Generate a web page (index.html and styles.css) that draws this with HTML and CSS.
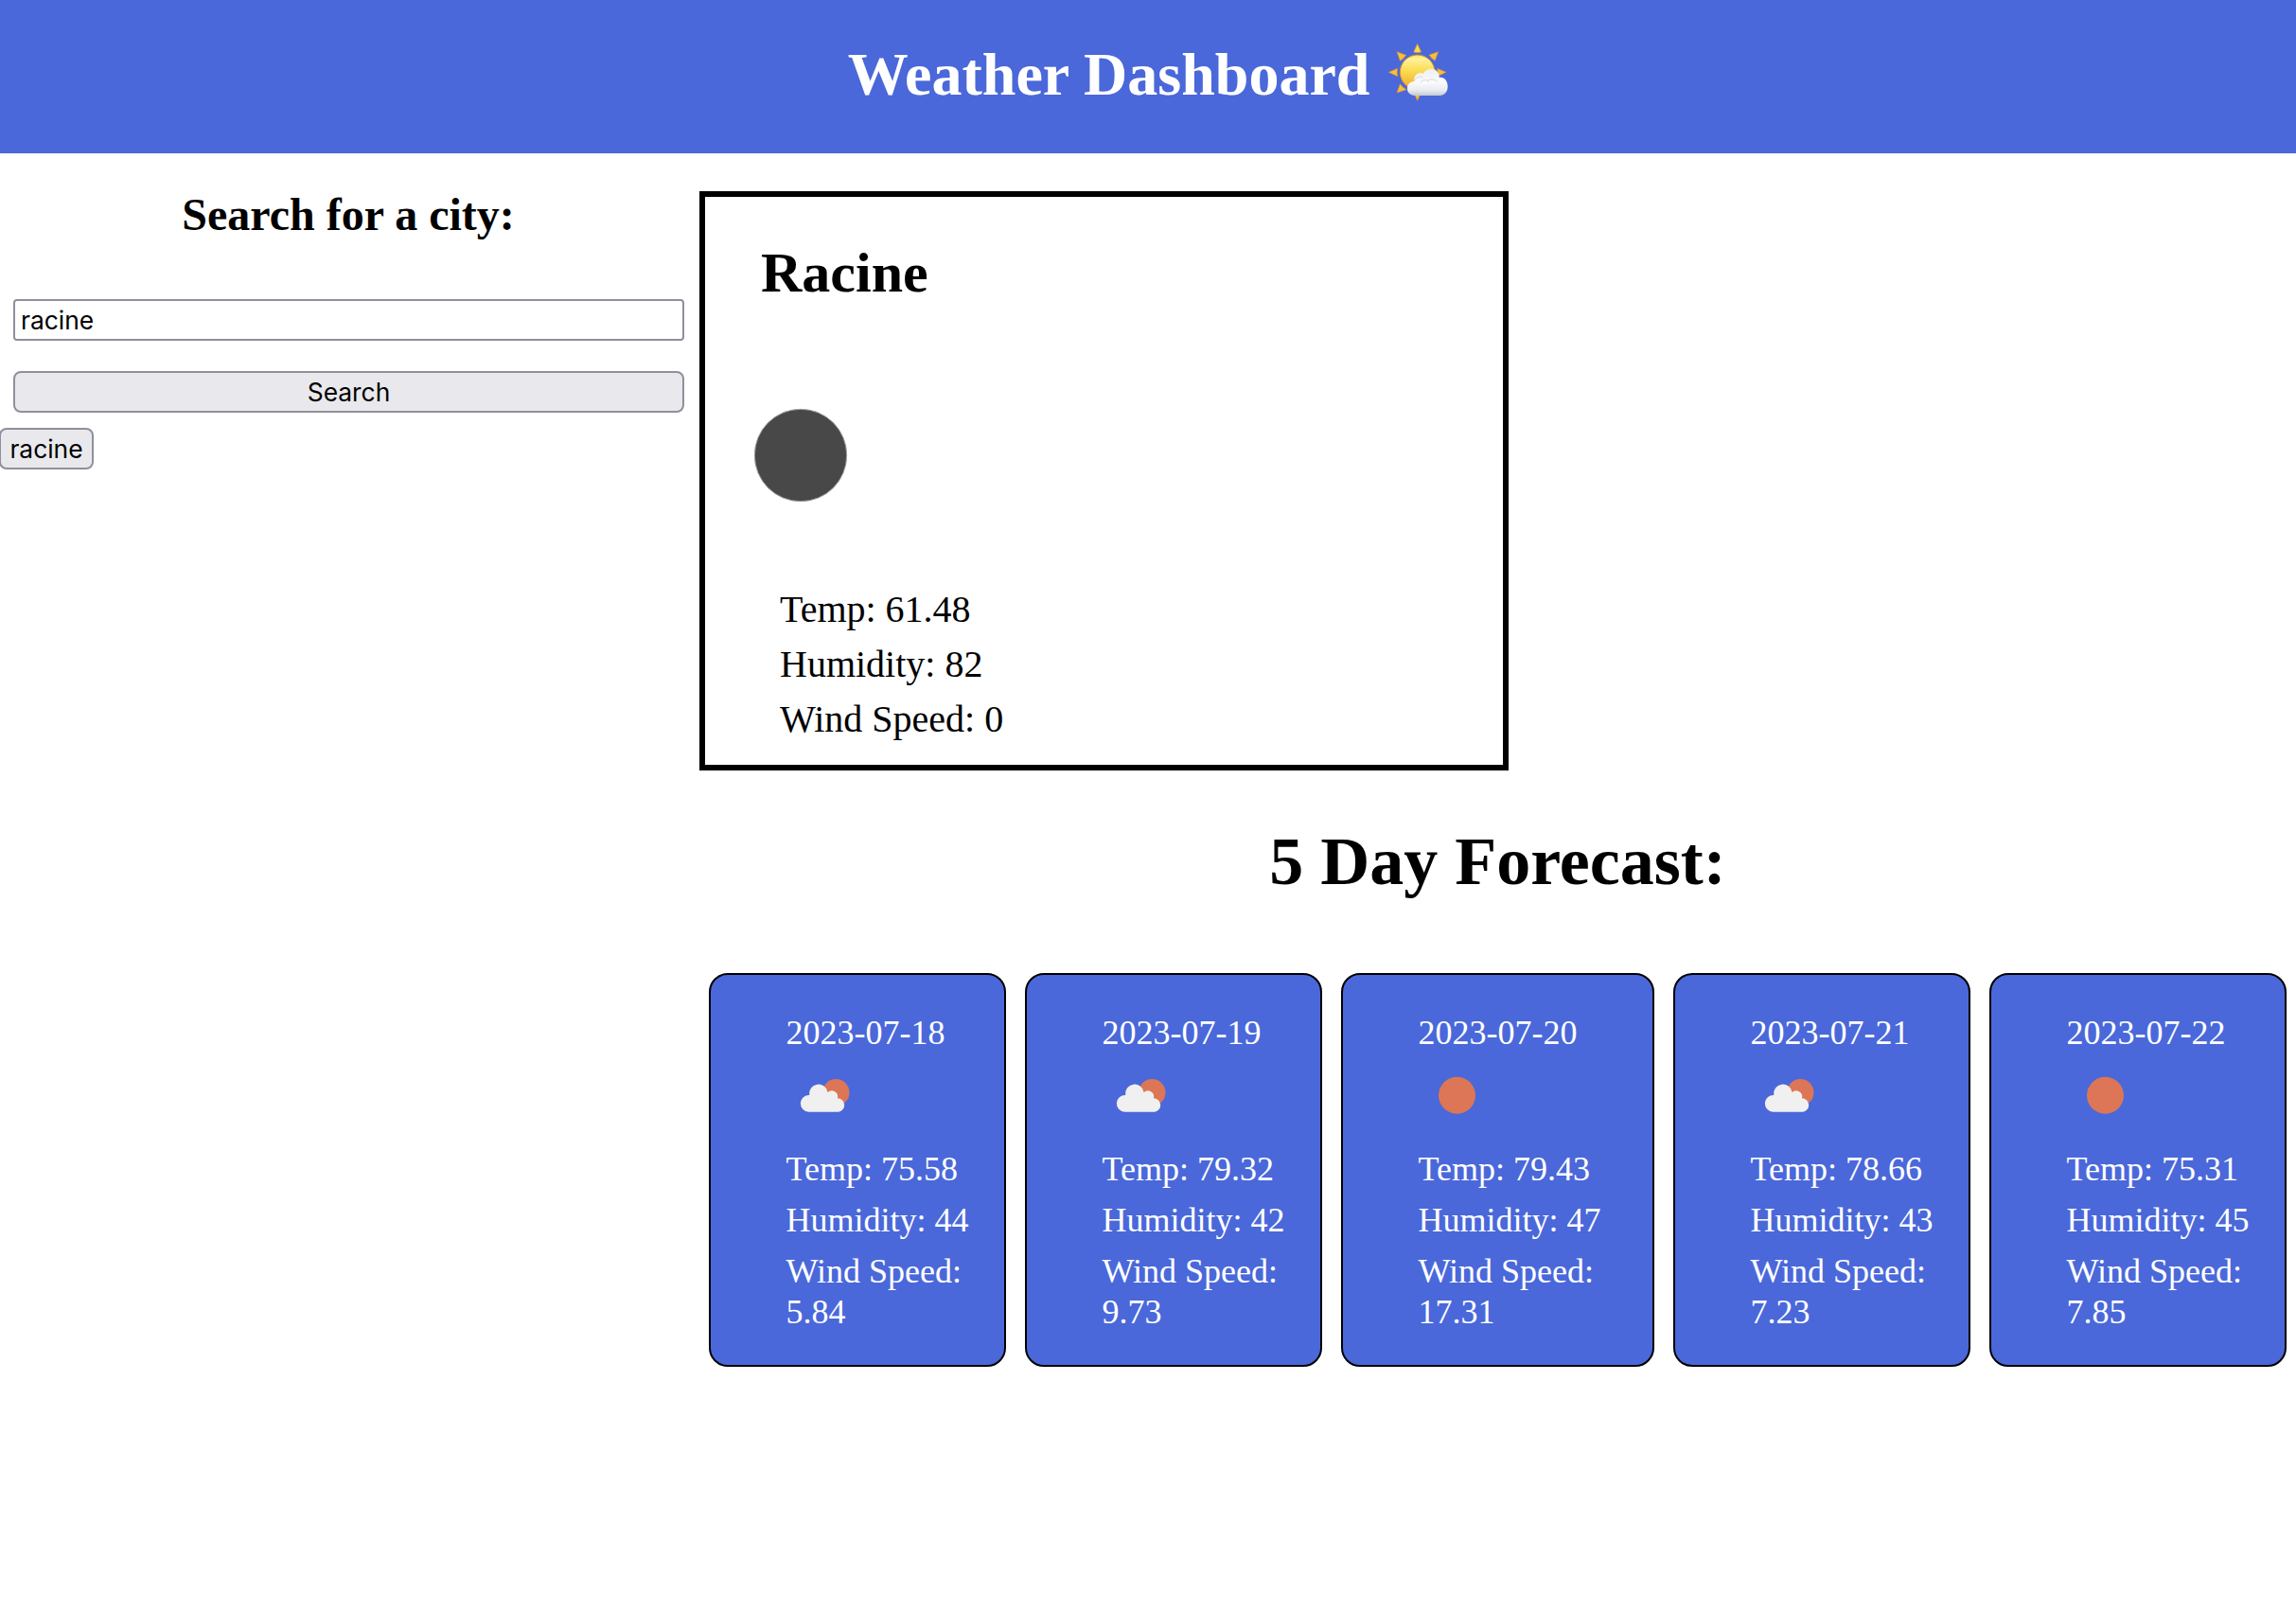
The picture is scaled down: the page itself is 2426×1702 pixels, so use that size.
FILE: index.html
```
<!DOCTYPE html>
<html lang="en">
<head>
<meta charset="UTF-8">
<title>Weather Dashboard</title>
<link rel="stylesheet" href="styles.css">
</head>
<body>
<svg class="defs" width="0" height="0" aria-hidden="true">
  <symbol id="cloudy" viewBox="0 0 80 80">
    <circle cx="52.3" cy="37.3" r="14.2" fill="#dc7656"/>
    <path d="M23.300 57.700a8.900 8.900 0 0 1 .9-17.800a9.800 9.800 0 0 1 19.400-3a6.400 6.400 0 0 1 10.400 6.300a7.300 7.300 0 0 1 1.100 14.500z" fill="#f0f0f0"/>
  </symbol>
  <symbol id="clear" viewBox="0 0 80 80">
    <circle cx="40.5" cy="40.300" r="19.500" fill="#dc7656"/>
  </symbol>
</svg>
<header class="header">
  <h1 class="title">Weather Dashboard <svg class="emoji" viewBox="75 47 192 189" aria-hidden="true">
    <defs>
      <linearGradient id="sun" x1="0" y1="0" x2="0" y2="1"><stop offset="0" stop-color="#fde65a"/><stop offset=".12" stop-color="#fff29a"/><stop offset=".45" stop-color="#fbdc52"/><stop offset="1" stop-color="#f1a62c"/></linearGradient>
      <linearGradient id="cloud" x1="0" y1="0" x2="0" y2="1"><stop offset="0" stop-color="#eef0f4"/><stop offset=".5" stop-color="#fbfbfd"/><stop offset=".8" stop-color="#eaebf0"/><stop offset="1" stop-color="#c3c9d3"/></linearGradient>
    </defs>
    <g fill="#f6bf3c" stroke="#d6902f" stroke-width="2" stroke-linejoin="round">
      <path fill="#fada4e" d="M170 51l12 26q-12 3-24 0z"/>
      <path d="M236 76l-10 28q-12-6-19-18z"/>
      <path d="M105 76l29 11q-7 11-19 18z"/>
      <path d="M79 141l28-12q-3 12 0 25z"/>
      <path d="M261 141l-28-12q3 12 0 25z"/>
      <path d="M105 206l10-28q7 11 20 18z"/>
      <path d="M170 231l-12-27h24z"/>
    </g>
    <circle cx="170" cy="141" r="55" fill="url(#sun)" stroke="#d98f2c" stroke-width="3"/>
    <path d="M162 215c-32 0-32-43-2-45c-3-19 14-32 28-25c15-24 52-17 51 12c17-1 27 12 27 29c0 20-12 29-27 29z" fill="url(#cloud)"/>
    <path d="M161 168c4-11 15-17 26-10M181 173c6-10 18-10 25-2M204 166c11-5 22-2 28 4" fill="none" stroke="#d4d9df" stroke-width="3" stroke-linecap="round"/>
  </svg></h1>
</header>
<main class="layout">
  <aside class="sidebar">
    <h2 class="search-heading">Search for a city:</h2>
    <form class="search-form">
      <input class="field" type="text" value="racine">
      <button class="button" type="button">Search</button>
    </form>
    <button class="button history" type="button">racine</button>
  </aside>
  <section class="content">
    <article class="current">
      <h2 class="city">Racine</h2>
      <svg class="moon" viewBox="0 0 100 100" aria-hidden="true"><circle cx="50" cy="50" r="48.700" fill="#484849" stroke="#a5a5a5" stroke-width="1"/></svg>
      <ul class="current-stats"><li>Temp: 61.48</li><li>Humidity: 82</li><li>Wind Speed: 0</li></ul>
    </article>
    <h2 class="forecast-heading">5 Day Forecast:</h2>
    <div class="forecast">
      <ul class="day"><li>2023-07-18</li><li class="icon"><svg><use href="#cloudy"/></svg></li><li>Temp: 75.58</li><li>Humidity: 44</li><li>Wind Speed: 5.84</li></ul>
      <ul class="day"><li>2023-07-19</li><li class="icon"><svg><use href="#cloudy"/></svg></li><li>Temp: 79.32</li><li>Humidity: 42</li><li>Wind Speed: 9.73</li></ul>
      <ul class="day"><li>2023-07-20</li><li class="icon"><svg><use href="#clear"/></svg></li><li>Temp: 79.43</li><li>Humidity: 47</li><li>Wind Speed: 17.31</li></ul>
      <ul class="day"><li>2023-07-21</li><li class="icon"><svg><use href="#cloudy"/></svg></li><li>Temp: 78.66</li><li>Humidity: 43</li><li>Wind Speed: 7.23</li></ul>
      <ul class="day"><li>2023-07-22</li><li class="icon"><svg><use href="#clear"/></svg></li><li>Temp: 75.31</li><li>Humidity: 45</li><li>Wind Speed: 7.85</li></ul>
    </div>
  </section>
</main>
</body>
</html>
```
FILE: styles.css
```
* { box-sizing: border-box; }
body { margin: 0; background: #fff; color: #000; font-family: "Liberation Serif", "Times New Roman", serif; overflow: hidden; }
h1, h2, ul { margin: 0; padding: 0; }
ul { list-style: none; }
.defs { display: none; }

.header { height: 162px; padding-top: 42px; background: #4a68da; color: #fff; text-align: center; }
.title { font-size: 64px; line-height: 74px; }
.emoji { width: 64px; height: 63px; margin-left: 3px; vertical-align: -8px; }

.layout { display: grid; grid-template-columns: 739px 1fr; padding-top: 40px; }

.search-heading { width: 736px; font-size: 48px; line-height: 50px; text-align: center; }
.search-form { display: flex; flex-direction: column; gap: 32px; padding: 64px 16px 0 14px; }
.field, .button { height: 44px; border: 2px solid #8f8f9d; font: 26.4px/40px Inter, "Liberation Sans", sans-serif; color: #000; }
.field { padding: 0 6px; border-radius: 4px; background: #fff; }
.button { padding: 0 8px; border-radius: 8px; background: #e9e9ed; }
.history { display: block; width: 100px; margin: 16px 0 0 -1px; }

.current { width: 855px; height: 612px; padding: 49px 52px 0; border: 6px solid #000; }
.city { padding-left: 7px; font-size: 60px; line-height: 62px; }
.moon { display: block; width: 100px; height: 100px; margin-top: 112px; margin-left: -1px; }
.current-stats { padding: 84px 0 0 27px; font-size: 40px; line-height: 58px; }

.forecast-heading { margin-top: 55px; font-size: 72px; line-height: 82px; text-align: center; }
.forecast { display: grid; grid-template-columns: 314px 314px 331px 314px 314px; gap: 20px; padding: 77px 0 0 10px; }
.day { height: 416px; padding: 40px 20px 0 79.5px; border: 2px solid #000; border-radius: 20px; background: #4a68da; color: #fff; font-size: 36px; line-height: 43px; }
.day li { margin-bottom: 11px; }
.day .icon { height: 79px; padding-top: 11px; }
.icon svg { display: block; width: 80px; height: 80px; margin-top: -18px; }
```
